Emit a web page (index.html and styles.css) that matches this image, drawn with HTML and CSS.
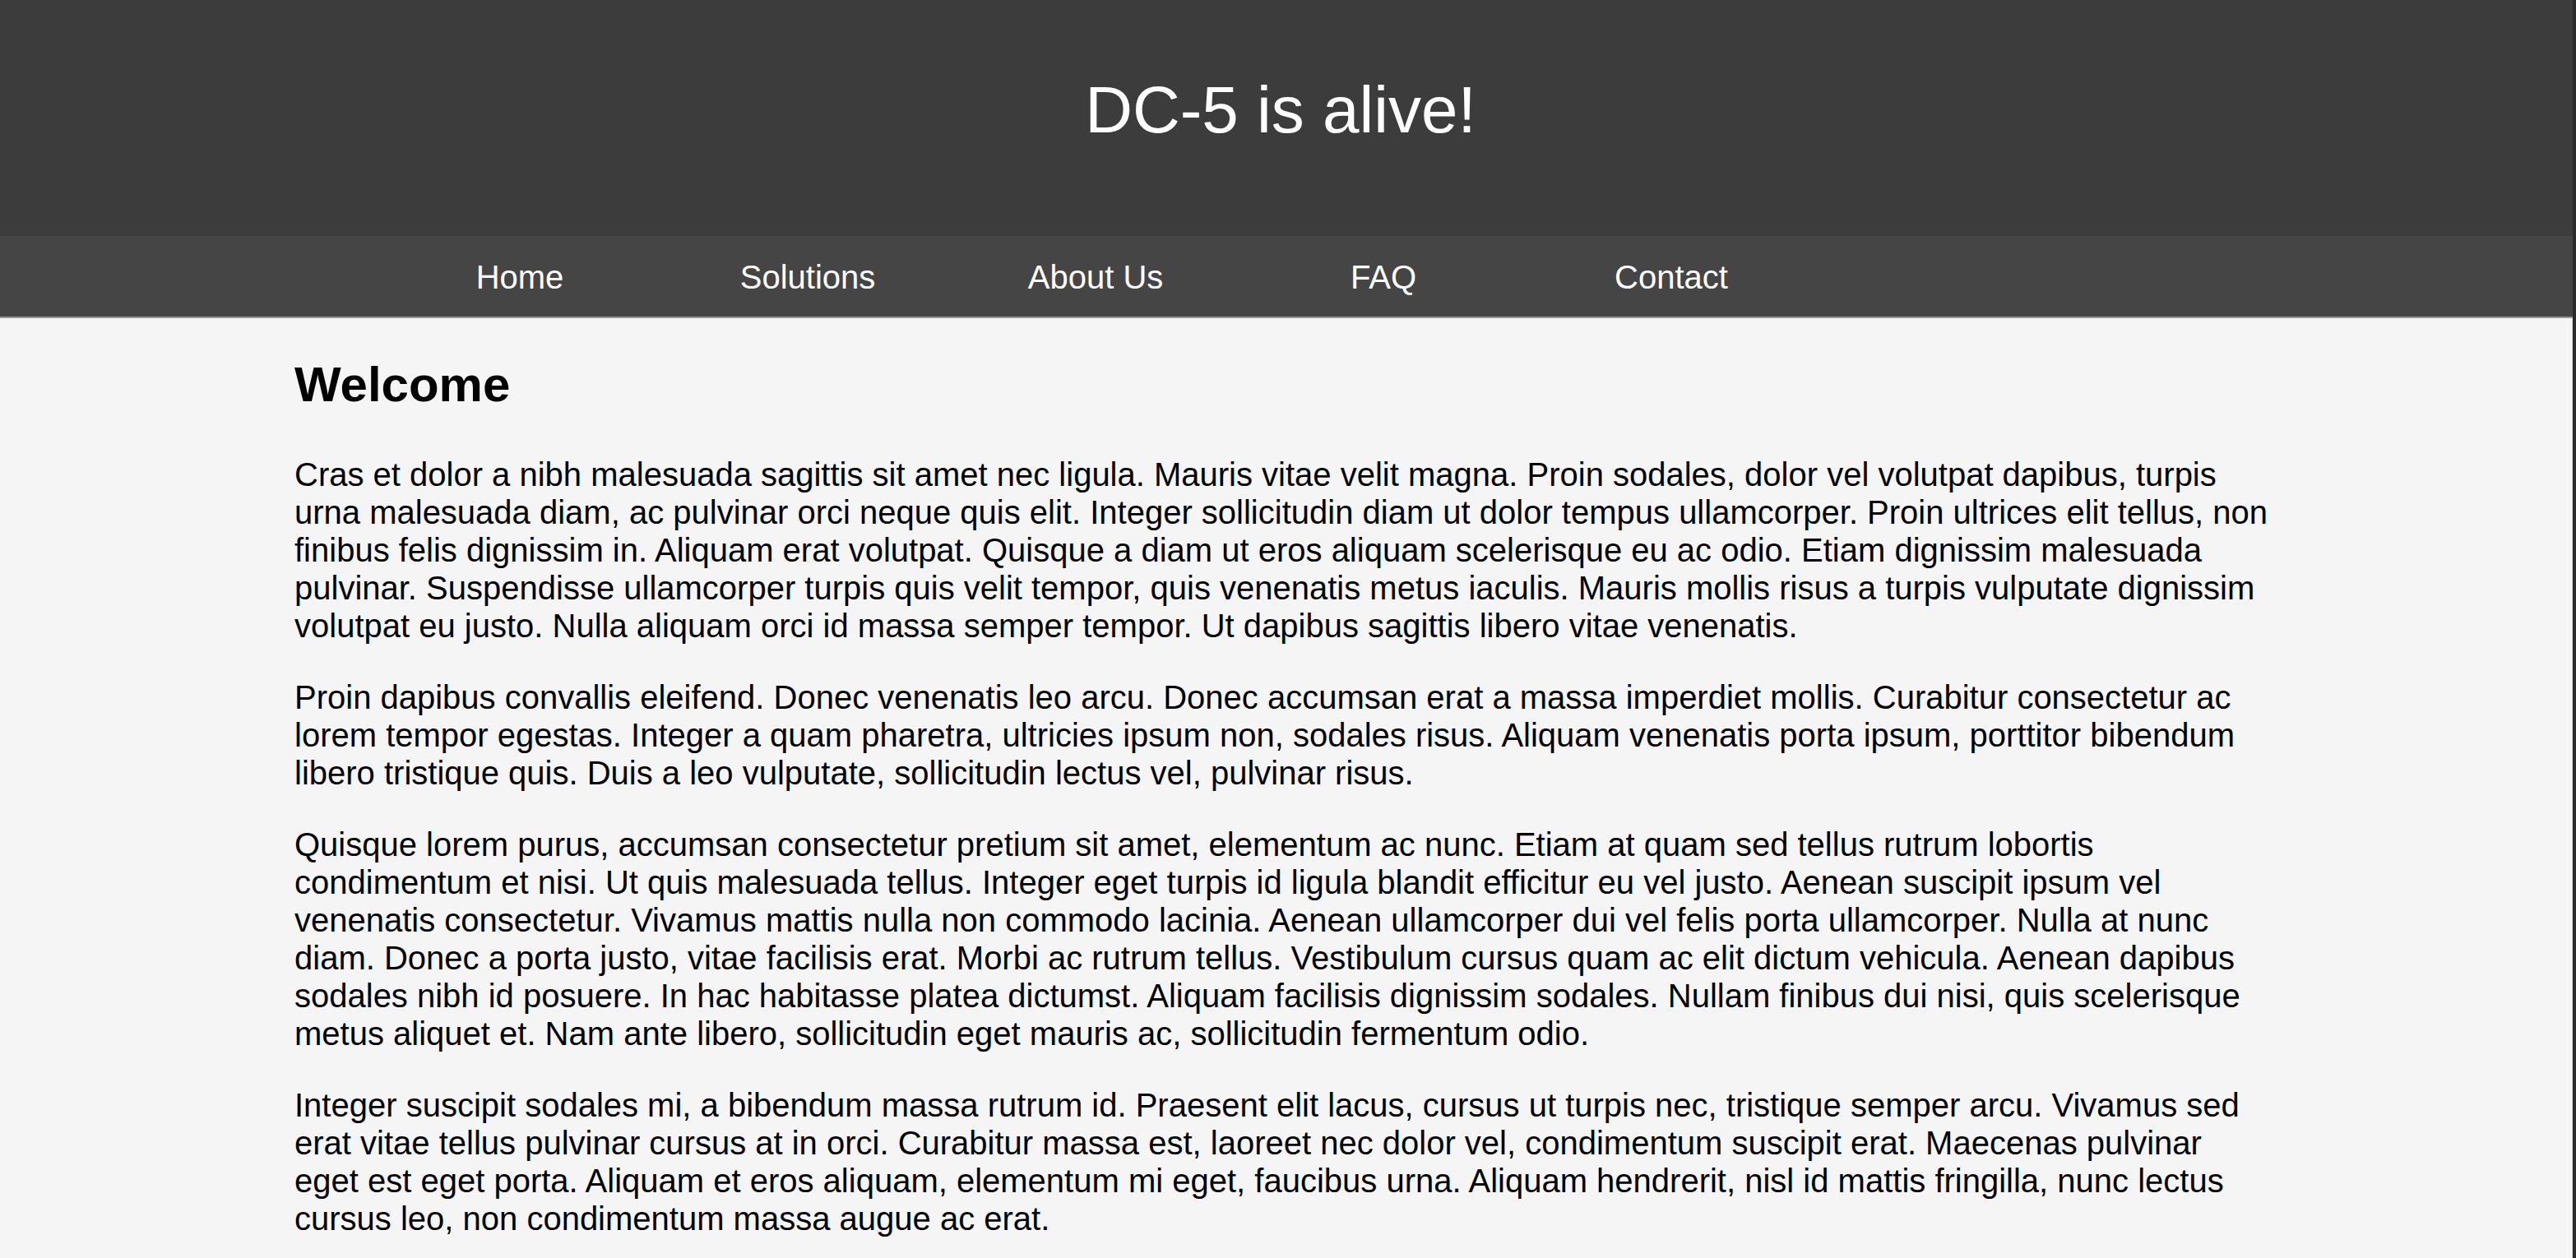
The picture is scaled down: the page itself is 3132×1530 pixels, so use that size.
FILE: index.html
```html
<!DOCTYPE html>
<html lang="en">
<head>
<meta charset="utf-8">
<title>DC-5 is alive!</title>
<link rel="stylesheet" href="styles.css">
</head>
<body>
<div class="page">
  <header class="site-header">
    <h1 class="site-title">DC-5 is alive!</h1>
  </header>
  <nav class="site-nav">
    <ul class="nav-list">
      <li class="nav-item"><a href="#">Home</a></li>
      <li class="nav-item"><a href="#">Solutions</a></li>
      <li class="nav-item"><a href="#">About Us</a></li>
      <li class="nav-item"><a href="#">FAQ</a></li>
      <li class="nav-item"><a href="#">Contact</a></li>
    </ul>
  </nav>
  <main class="content">
    <div class="container">
      <h2 class="heading">Welcome</h2>
      <p class="para">Cras et dolor a nibh malesuada sagittis sit amet nec ligula. Mauris vitae velit magna. Proin sodales, dolor vel volutpat dapibus, turpis urna malesuada diam, ac pulvinar orci neque quis elit. Integer sollicitudin diam ut dolor tempus ullamcorper. Proin ultrices elit tellus, non finibus felis dignissim in. Aliquam erat volutpat. Quisque a diam ut eros aliquam scelerisque eu ac odio. Etiam dignissim malesuada pulvinar. Suspendisse ullamcorper turpis quis velit tempor, quis venenatis metus iaculis. Mauris mollis risus a turpis vulputate dignissim volutpat eu justo. Nulla aliquam orci id massa semper tempor. Ut dapibus sagittis libero vitae venenatis.</p>
      <p class="para">Proin dapibus convallis eleifend. Donec venenatis leo arcu. Donec accumsan erat a massa imperdiet mollis. Curabitur consectetur ac lorem tempor egestas. Integer a quam pharetra, ultricies ipsum non, sodales risus. Aliquam venenatis porta ipsum, porttitor bibendum libero tristique quis. Duis a leo vulputate, sollicitudin lectus vel, pulvinar risus.</p>
      <p class="para">Quisque lorem purus, accumsan consectetur pretium sit amet, elementum ac nunc. Etiam at quam sed tellus rutrum lobortis condimentum et nisi. Ut quis malesuada tellus. Integer eget turpis id ligula blandit efficitur eu vel justo. Aenean suscipit ipsum vel venenatis consectetur. Vivamus mattis nulla non commodo lacinia. Aenean ullamcorper dui vel felis porta ullamcorper. Nulla at nunc diam. Donec a porta justo, vitae facilisis erat. Morbi ac rutrum tellus. Vestibulum cursus quam ac elit dictum vehicula. Aenean dapibus sodales nibh id posuere. In hac habitasse platea dictumst. Aliquam facilisis dignissim sodales. Nullam finibus dui nisi, quis scelerisque metus aliquet et. Nam ante libero, sollicitudin eget mauris ac, sollicitudin fermentum odio.</p>
      <p class="para">Integer suscipit sodales mi, a bibendum massa rutrum id. Praesent elit lacus, cursus ut turpis nec, tristique semper arcu. Vivamus sed erat vitae tellus pulvinar cursus at in orci. Curabitur massa est, laoreet nec dolor vel, condimentum suscipit erat. Maecenas pulvinar eget est eget porta. Aliquam et eros aliquam, elementum mi eget, faucibus urna. Aliquam hendrerit, nisl id mattis fringilla, nunc lectus cursus leo, non condimentum massa augue ac erat.</p>
    </div>
  </main>
</div>
</body>
</html>
```

FILE: styles.css
```css
html {
  background: #2b2b2b;
  height: 100%;
  overflow: hidden;
}

body {
  margin: 0 4px 0 0;
  height: 100%;
  font-family: "Liberation Sans", Arial, sans-serif;
  background: #f5f5f5;
  color: #000;
}

.page {
  display: flex;
  flex-direction: column;
  min-height: 100%;
}

.site-header {
  background: #3c3c3c;
  height: 287px;
  box-sizing: border-box;
  padding: 88px 14px 0 0;
  text-align: center;
}

.site-title {
  margin: 0;
  font-size: 80px;
  font-weight: normal;
  color: #ffffff;
  line-height: 92px;
}

.site-nav {
  background: #454545;
  height: 100px;
  border-bottom: 2px solid #9a9a9a;
  box-sizing: border-box;
}

.nav-list {
  list-style: none;
  margin: 0;
  padding: 0 0 0 457px;
  display: flex;
  height: 100%;
  align-items: center;
}

.nav-item {
  width: 350px;
  text-align: center;
  font-size: 40px;
  line-height: 46px;
  padding-top: 2px;
}

.nav-item a {
  color: #ffffff;
  text-decoration: none;
}

.content {
  flex: 1;
  background: #f5f5f5;
  border-right: 1px solid #d6d6d6;
}

.container {
  width: 2403px;
  margin-left: 358px;
  padding-top: 46px;
}

.heading {
  margin: 0 0 52px;
  font-size: 60px;
  font-weight: bold;
  line-height: 69px;
}

.para {
  margin: 0 0 41px;
  font-size: 40px;
  line-height: 46px;
}
```
